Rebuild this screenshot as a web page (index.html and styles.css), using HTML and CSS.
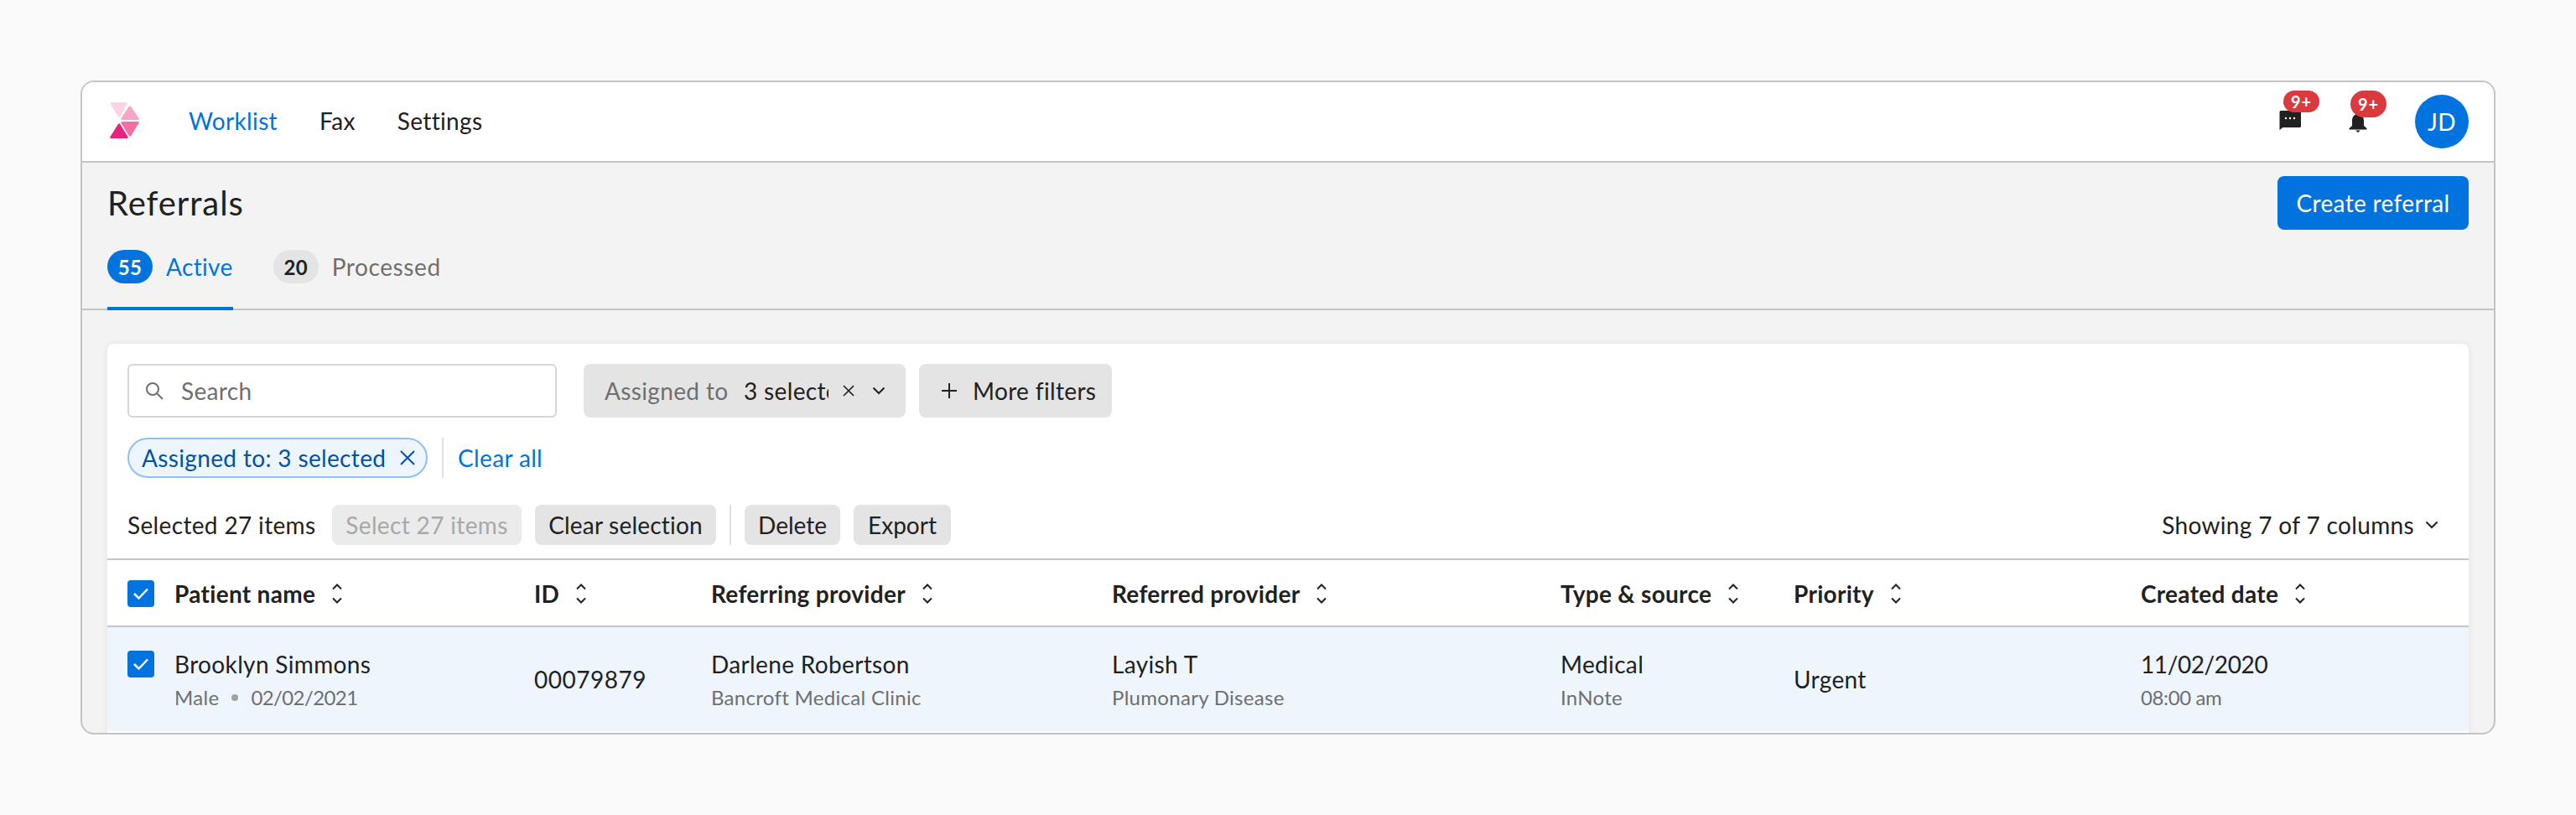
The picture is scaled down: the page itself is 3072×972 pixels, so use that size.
FILE: index.html
```html
<!DOCTYPE html>
<html lang="en">
<head>
<meta charset="utf-8">
<title>Referrals</title>
<link rel="stylesheet" href="styles.css">
</head>
<body>
<div class="window">
  <header class="topbar">
    <svg class="logo" width="35" height="44" viewBox="0 0 35 44" stroke-width="2.500" stroke-linejoin="round">
      <path fill="#fbd3e4" stroke="#fbd3e4" d="M2 1.500H19.500L11 16.500Z"/>
      <path fill="#f7a6c8" stroke="#f7a6c8" d="M24 5.500L33.500 19.800H14.500Z"/>
      <path fill="#f46da3" stroke="#f46da3" d="M14.500 24.200H33.500L24 39.500Z"/>
      <path fill="#e8237b" stroke="#e8237b" d="M11 26.500L20.500 41.800H1.500Z"/>
    </svg>
    <nav class="nav">
      <a class="nav-item nav-active">Worklist</a>
      <a class="nav-item">Fax</a>
      <a class="nav-item">Settings</a>
    </nav>
    <div class="top-actions">
      <div class="icon-wrap icon-chat">
        <svg width="26" height="24" viewBox="0 0 26 24"><path fill="#212121" d="M2 1H24.500A1.500 1.500 0 0 1 26 2.500V19.500A1.500 1.500 0 0 1 24.500 21H4.500L0.500 24V2.500A1.500 1.500 0 0 1 2 1Z"/><circle cx="8" cy="10" r="1.200" fill="#fff"/><circle cx="13" cy="10" r="1.200" fill="#fff"/><circle cx="18" cy="10" r="1.200" fill="#fff"/></svg>
        <span class="badge badge-chat">9+</span>
      </div>
      <div class="icon-wrap icon-bell">
        <svg width="22" height="24" viewBox="0 0 22 24"><path fill="#212121" d="M4 16V10C4 5 7 2 11 2S18 5 18 10V16L21.500 19V20.500H.5V19ZM8 21.500H14L11 24Z"/></svg>
        <span class="badge badge-bell">9+</span>
      </div>
      <div class="avatar">JD</div>
    </div>
  </header>

  <section class="page-head">
    <div class="title-row">
      <h1 class="title">Referrals</h1>
      <button class="btn-primary">Create referral</button>
    </div>
    <div class="tabs">
      <div class="tab tab-active"><span class="pill pill-blue">55</span><span>Active</span></div>
      <div class="tab"><span class="pill pill-gray">20</span><span class="tab-text">Processed</span></div>
    </div>
  </section>

  <section class="card">
    <div class="filters">
      <div class="search">
        <svg width="24" height="24" viewBox="0 0 24 24" fill="none" stroke="#6f6f6f" stroke-width="2"><circle cx="10" cy="10" r="7"/><path d="M15.500 15.500L22 22"/></svg>
        <span>Search</span>
      </div>
      <div class="filter-select">
        <span class="filter-label">Assigned to</span>
        <span class="filter-value">3 selected</span>
        <svg class="filter-x" width="14" height="14" viewBox="0 0 14 14" fill="none" stroke="#212121" stroke-width="1.600"><path d="M1 1L13 13M13 1L1 13"/></svg>
        <svg class="filter-chev" width="16" height="10" viewBox="0 0 16 10" fill="none" stroke="#212121" stroke-width="2"><path d="M1.500 1.500L8 8L14.500 1.500"/></svg>
      </div>
      <button class="btn-gray btn-more">
        <svg width="18" height="18" viewBox="0 0 18 18" fill="none" stroke="#212121" stroke-width="2"><path d="M9 0V18M0 9H18"/></svg>
        More filters
      </button>
    </div>

    <div class="applied">
      <div class="chip">Assigned to: 3 selected
        <svg width="18" height="18" viewBox="0 0 18 18" fill="none" stroke="#0052a3" stroke-width="2"><path d="M1 1L17 17M17 1L1 17"/></svg>
      </div>
      <span class="vline vline-chip"></span>
      <a class="link">Clear all</a>
    </div>

    <div class="actions">
      <span class="selected-count">Selected 27 items</span>
      <button class="btn-gray btn-disabled">Select 27 items</button>
      <button class="btn-gray btn-clear">Clear selection</button>
      <span class="vline"></span>
      <button class="btn-gray btn-delete">Delete</button>
      <button class="btn-gray btn-export">Export</button>
      <div class="columns-toggle">Showing 7 of 7 columns
        <svg width="16" height="10" viewBox="0 0 16 10" fill="none" stroke="#212121" stroke-width="2"><path d="M1.500 1.500L8 8L14.500 1.500"/></svg>
      </div>
    </div>

    <div class="table">
      <div class="t-row t-head">
        <div class="cell"><span class="check"><svg width="20" height="16" viewBox="0 0 20 16" fill="none" stroke="#fff" stroke-width="2.500"><path d="M2 8L7.500 13.500L18 2.500"/></svg></span></div>
        <div class="cell th">Patient name <svg class="sort" width="12" height="24" viewBox="0 0 12 24" fill="none" stroke="#212121" stroke-width="2"><path d="M1 6.500L6 1.500L11 6.500M1 17.500L6 22.500L11 17.500"/></svg></div>
        <div class="cell th">ID <svg class="sort" width="12" height="24" viewBox="0 0 12 24" fill="none" stroke="#212121" stroke-width="2"><path d="M1 6.500L6 1.500L11 6.500M1 17.500L6 22.500L11 17.500"/></svg></div>
        <div class="cell th">Referring provider <svg class="sort" width="12" height="24" viewBox="0 0 12 24" fill="none" stroke="#212121" stroke-width="2"><path d="M1 6.500L6 1.500L11 6.500M1 17.500L6 22.500L11 17.500"/></svg></div>
        <div class="cell th">Referred provider <svg class="sort" width="12" height="24" viewBox="0 0 12 24" fill="none" stroke="#212121" stroke-width="2"><path d="M1 6.500L6 1.500L11 6.500M1 17.500L6 22.500L11 17.500"/></svg></div>
        <div class="cell th">Type &amp; source <svg class="sort" width="12" height="24" viewBox="0 0 12 24" fill="none" stroke="#212121" stroke-width="2"><path d="M1 6.500L6 1.500L11 6.500M1 17.500L6 22.500L11 17.500"/></svg></div>
        <div class="cell th">Priority <svg class="sort" width="12" height="24" viewBox="0 0 12 24" fill="none" stroke="#212121" stroke-width="2"><path d="M1 6.500L6 1.500L11 6.500M1 17.500L6 22.500L11 17.500"/></svg></div>
        <div class="cell th">Created date <svg class="sort" width="12" height="24" viewBox="0 0 12 24" fill="none" stroke="#212121" stroke-width="2"><path d="M1 6.500L6 1.500L11 6.500M1 17.500L6 22.500L11 17.500"/></svg></div>
      </div>
      <div class="t-row t-body">
        <div class="cell cell-check"><span class="check"><svg width="20" height="16" viewBox="0 0 20 16" fill="none" stroke="#fff" stroke-width="2.500"><path d="M2 8L7.500 13.500L18 2.500"/></svg></span></div>
        <div class="cell stack"><div class="main">Brooklyn Simmons</div><div class="sub">Male<i class="dot"></i><span class="tight">02/02/2021</span></div></div>
        <div class="cell main wide">00079879</div>
        <div class="cell stack"><div class="main">Darlene Robertson</div><div class="sub">Bancroft Medical Clinic</div></div>
        <div class="cell stack"><div class="main">Layish T</div><div class="sub">Plumonary Disease</div></div>
        <div class="cell stack"><div class="main">Medical</div><div class="sub">InNote</div></div>
        <div class="cell main">Urgent</div>
        <div class="cell stack"><div class="main tight">11/02/2020</div><div class="sub tight">08:00 am</div></div>
      </div>
    </div>
  </section>
</div>
</body>
</html>
```
FILE: styles.css
```css
* { box-sizing: border-box; }
html, body { margin: 0; height: 972px; overflow: hidden; }
body {
  background: #fafafa;
  padding: 96px;
  font-family: "Lato", "Open Sans", sans-serif;
  font-size: 28px;
  letter-spacing: .35px;
  color: #212121;
}
button { font: inherit; letter-spacing: inherit; border: 0; cursor: pointer; }
.window {
  height: 780px;
  border: 2px solid #c4c4c4;
  border-radius: 16px;
  background: #f3f3f3;
  overflow: hidden;
}
.topbar {
  height: 96px;
  background: #fff;
  border-bottom: 2px solid #c4c4c4;
  display: flex;
  align-items: center;
  padding: 0 30px 0 33px;
}
.logo { display: block; margin-top: -2px; }
.nav { display: flex; gap: 50px; margin-left: 59px; margin-top: -2px; }
.nav-item { white-space: nowrap; }
.nav-active { color: #0073de; }
.top-actions { margin-left: auto; display: flex; align-items: center; }
.icon-wrap { position: relative; display: flex; }
.icon-chat { margin-right: 57px; margin-top: -4px; }
.icon-bell { margin-right: 57px; margin-top: 2px; }
.badge {
  position: absolute;
  background: #da3a3d;
  color: #fff;
  font-size: 20px;
  font-weight: 700;
  letter-spacing: 1px;
  width: 43px;
  display: flex;
  align-items: center;
  justify-content: center;
  border-radius: 14px;
}
.badge-chat { left: 5px; top: -23px; height: 26px; }
.badge-bell { left: 2px; top: -26px; height: 32px; border-radius: 16px; }
.avatar {
  width: 64px;
  height: 64px;
  border-radius: 50%;
  background: #0073de;
  color: #fff;
  display: flex;
  align-items: center;
  justify-content: center;
}
.page-head { padding: 16px 30px 0; border-bottom: 2px solid #c4c4c4; margin: 0; }
.title-row { display: flex; justify-content: space-between; align-items: center; }
.title { margin: 0; font-size: 40px; font-weight: 400; line-height: 64px; letter-spacing: .9px; }
.btn-primary {
  height: 64px;
  width: 228px;
  background: #0073de;
  color: #fff;
  border-radius: 8px;
}
.tabs { display: flex; gap: 48px; margin-top: 24px; margin-bottom: -2px; }
.tab {
  display: flex;
  align-items: center;
  gap: 16px;
  padding-bottom: 28px;
  border-bottom: 4px solid transparent;
  color: #6f6f6f;
}
.tab-text { letter-spacing: .6px; }
.tab-active { color: #0073de; border-bottom-color: #0073de; border-radius: 2px 2px 0 0; }
.pill {
  width: 54px;
  height: 40px;
  border-radius: 20px;
  display: flex;
  align-items: center;
  justify-content: center;
  font-size: 24px;
  font-weight: 700;
}
.pill-blue { background: #0073de; color: #fff; }
.pill-gray { background: #e4e4e4; color: #212121; }
.card {
  margin: 40px 30px 0;
  height: 510px;
  background: #fff;
  border-radius: 8px 8px 0 0;
  box-shadow: 0 0 8px rgba(0, 0, 0, .07);
  padding-top: 24px;
}
.filters, .applied, .actions { display: flex; align-items: center; margin: 0 24px; }
.search {
  width: 512px;
  height: 64px;
  border: 2px solid #d6d6d6;
  border-radius: 6px;
  display: flex;
  align-items: center;
  gap: 20px;
  padding-left: 18px;
  color: #6f6f6f;
}
.filter-select {
  margin-left: 32px;
  width: 384px;
  height: 64px;
  background: #e4e4e4;
  border-radius: 8px;
  display: flex;
  align-items: center;
  padding-left: 25px;
  white-space: nowrap;
}
.filter-label { color: #6f6f6f; width: 166px; }
.filter-value { width: 101px; overflow: hidden; }
.filter-x { margin-left: 17px; }
.filter-chev { margin-left: 21px; }
.btn-gray {
  height: 48px;
  background: #e4e4e4;
  color: #212121;
  border-radius: 8px;
  padding: 0;
  white-space: nowrap;
  display: flex;
  align-items: center;
  justify-content: center;
}
.btn-more { height: 64px; margin-left: 16px; width: 230px; padding: 0 0 0 27px; gap: 19px; justify-content: flex-start; }
.applied { margin-top: 24px; height: 48px; }
.chip {
  height: 48px;
  width: 358px;
  border: 2px solid #8fc1f0;
  border-radius: 24px;
  background: #edf5fe;
  color: #0052a3;
  display: flex;
  align-items: center;
  justify-content: space-between;
  padding: 0 13px 0 15px;
  white-space: nowrap;
}
.vline { width: 2px; height: 48px; background: #e0e0e0; }
.vline-chip { margin: 0 17px; }
.link { color: #0073de; white-space: nowrap; }
.actions { margin-top: 32px; height: 48px; gap: 16px; }
.selected-count { width: 228px; white-space: nowrap; }
.btn-disabled { background: #ebebeb; color: #a8a8a8; width: 226px; }
.btn-clear { width: 216px; letter-spacing: .2px; }
.btn-delete { width: 114px; letter-spacing: 0; }
.btn-export { width: 116px; letter-spacing: 0; }
.columns-toggle { margin-left: auto; display: flex; align-items: center; gap: 13px; white-space: nowrap; padding-right: 12px; }
.table { margin-top: 16px; }
.t-row {
  display: grid;
  grid-template-columns: 80px 429px 211px 478px 535px 278px 414px 1fr;
}
.t-head { height: 82px; border-top: 2px solid #c4c4c4; border-bottom: 2px solid #c4c4c4; align-items: center; padding-top: 2px; }
.t-head .cell:first-child { padding-left: 24px; display: flex; }
.t-body { height: 124px; background: #eef5fd; align-items: center; }
.cell-check { align-self: start; padding: 28px 0 0 24px; display: flex; }
.th { font-weight: 700; display: flex; align-items: center; gap: 20px; white-space: nowrap; letter-spacing: .3px; }
.check {
  width: 32px;
  height: 32px;
  background: #0073de;
  border-radius: 4px;
  display: flex;
  align-items: center;
  justify-content: center;
}
.main { white-space: nowrap; line-height: 40px; }
.wide { letter-spacing: .5px; }
.stack { margin-top: 4px; }
.sub { font-size: 24px; color: #6f6f6f; line-height: 40px; display: flex; align-items: center; white-space: nowrap; letter-spacing: .3px; }
.main.tight { letter-spacing: -.4px; }
.sub.tight { letter-spacing: -.4px; }
.sub .tight { letter-spacing: -.6px; }
.dot { width: 8px; height: 8px; border-radius: 50%; background: #a0a0a0; margin: 0 15px; }
```
